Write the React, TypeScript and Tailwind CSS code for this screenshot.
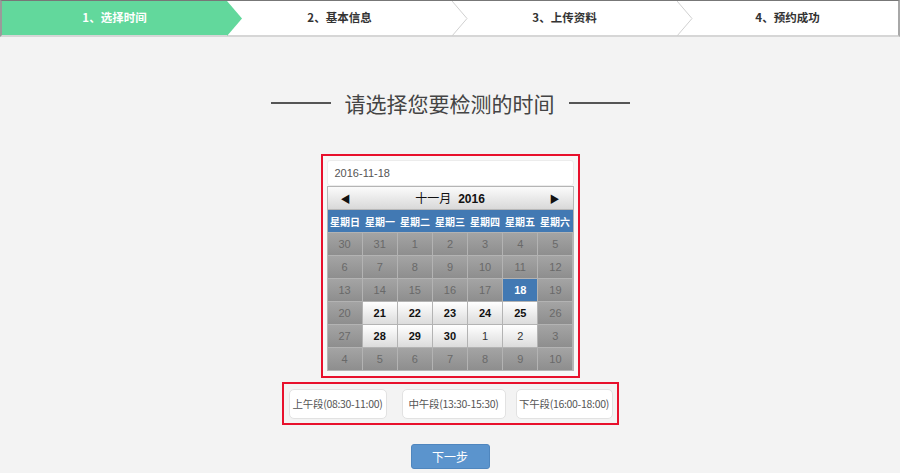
import React from "react";

const CJK = { fontFamily: '"Noto Sans CJK SC", "Noto Sans", sans-serif' };
const ARIAL = { fontFamily: '"Liberation Sans", "Noto Sans CJK SC", sans-serif' };

type Cell = { d: number; t: "g" | "w" | "wo" | "s" };

const rows: Cell[][] = [
  [30, 31, 1, 2, 3, 4, 5].map((d) => ({ d, t: "g" as const })),
  [6, 7, 8, 9, 10, 11, 12].map((d) => ({ d, t: "g" as const })),
  [
    { d: 13, t: "g" },
    { d: 14, t: "g" },
    { d: 15, t: "g" },
    { d: 16, t: "g" },
    { d: 17, t: "g" },
    { d: 18, t: "s" },
    { d: 19, t: "g" },
  ],
  [
    { d: 20, t: "g" },
    { d: 21, t: "w" },
    { d: 22, t: "w" },
    { d: 23, t: "w" },
    { d: 24, t: "w" },
    { d: 25, t: "w" },
    { d: 26, t: "g" },
  ],
  [
    { d: 27, t: "g" },
    { d: 28, t: "w" },
    { d: 29, t: "w" },
    { d: 30, t: "w" },
    { d: 1, t: "wo" },
    { d: 2, t: "wo" },
    { d: 3, t: "g" },
  ],
  [4, 5, 6, 7, 8, 9, 10].map((d) => ({ d, t: "g" as const })),
];

const weekdays = ["星期日", "星期一", "星期二", "星期三", "星期四", "星期五", "星期六"];

function DayCell({ c }: { c: Cell }) {
  if (c.t === "s") {
    return (
      <div className="h-[22px] flex items-center justify-center bg-[#4279b3] text-white font-bold text-[11px]">
        {c.d}
      </div>
    );
  }
  if (c.t === "w" || c.t === "wo") {
    return (
      <div
        className={`h-[22px] flex items-center justify-center bg-gradient-to-b from-[#ffffff] to-[#dcdcdc] text-[11px] ${
          c.t === "w" ? "font-bold text-[#111]" : "text-[#333]"
        }`}
      >
        {c.d}
      </div>
    );
  }
  return (
    <div className="h-[22px] flex items-center justify-center bg-gradient-to-b from-[#a4a4a4] to-[#8e8e8e] text-[11px] text-[#696969]">
      {c.d}
    </div>
  );
}

function Step({
  label,
  active,
  last,
}: {
  label: string;
  active?: boolean;
  last?: boolean;
}) {
  return (
    <div
      className={`relative h-full flex items-center justify-center ${
        last ? "flex-1" : "w-[225px]"
      } ${active ? "bg-[#62d89c]" : "bg-white"}`}
    >
      <span
        className={`text-[11.5px] font-bold ${active ? "text-white" : "text-[#333]"}`}
        style={CJK}
      >
        {label}
      </span>
      {!last && (
        <svg
          className="absolute top-0 left-full z-10"
          width="16"
          height="35"
          viewBox="0 0 16 35"
        >
          {active ? (
            <polygon points="0,0 15,17.5 0,35" fill="#62d89c" />
          ) : (
            <polyline
              points="0,0 15,17.5 0,35"
              fill="none"
              stroke="#d0d0d0"
              strokeWidth="1"
            />
          )}
        </svg>
      )}
    </div>
  );
}

export default function App() {
  return (
    <div className="w-[900px] h-[473px] bg-[#f3f3f3] overflow-hidden" style={CJK}>
      {/* Steps bar */}
      <div className="h-[37px] flex border-t border-t-[#777] border-b-2 border-b-[#d6d6d6] border-l-2 border-l-[#9a9a9a] border-r-2 border-r-[#a8a8a8] bg-white">
        <Step label="1、选择时间" active />
        <Step label="2、基本信息" />
        <Step label="3、上传资料" />
        <Step label="4、预约成功" last />
      </div>

      {/* Title */}
      <div className="mt-[52px] flex items-center justify-center">
        <div className="w-[60px] h-[2px] bg-[#555]" />
        <div className="mx-[14px] text-[21px] text-[#444] leading-[28px]" style={CJK}>
          请选择您要检测的时间
        </div>
        <div className="w-[61px] h-[2px] bg-[#555]" />
      </div>

      {/* Calendar box */}
      <div className="mt-[37px] flex justify-center">
        <div className="w-[259px] border-2 border-[#e8102c] pt-[4px] px-[4px] pb-[5px] bg-[#f7f7f7]">
          <div
            className="h-[26px] bg-white rounded-[3px] border border-[#ececec] flex items-center pl-[7px] text-[11px] text-[#555]"
            style={ARIAL}
          >
            2016-11-18
          </div>
          <div className="border border-[#b5b5b5]">
            <div className="h-[23px] flex items-center justify-between px-[13px] bg-gradient-to-b from-[#fbfbfb] to-[#d9d9d9] border-b border-[#b8b8b8]">
              <span className="text-[10px] text-[#111]">◀</span>
              <span className="text-[12px] font-bold text-[#111]">
                <span style={CJK} className="font-normal">十一月</span>
                <span style={ARIAL} className="ml-[7px]">2016</span>
              </span>
              <span className="text-[10px] text-[#111]">▶</span>
            </div>
            <div className="h-[22px] grid grid-cols-7 bg-[#4279b3]">
              {weekdays.map((w) => (
                <div
                  key={w}
                  className="flex items-center justify-center text-white text-[10px] font-bold"
                  style={CJK}
                >
                  {w}
                </div>
              ))}
            </div>
            <div className="grid grid-cols-7 gap-px bg-[#b3b3b3] pt-px" style={ARIAL}>
              {rows.flat().map((c, i) => (
                <DayCell key={i} c={c} />
              ))}
            </div>
          </div>
        </div>
      </div>

      {/* Time slots */}
      <div className="mt-[4px] flex justify-center">
        <div className="w-[337px] h-[43px] border-2 border-[#e8102c] flex items-center pl-[5px]">
          {[
            { t: "上午段(08:30-11:00)", w: "w-[98px]", ml: "" },
            { t: "中午段(13:30-15:30)", w: "w-[104px]", ml: "ml-[15px]" },
            { t: "下午段(16:00-18:00)", w: "w-[97px]", ml: "ml-[10px]" },
          ].map((b) => (
            <div
              key={b.t}
              className={`${b.w} ${b.ml} h-[30px] bg-white rounded-[5px] border border-[#e2e2e2] flex items-center justify-center text-[10.5px] text-[#555] tracking-[-0.3px]`}
              style={CJK}
            >
              {b.t}
            </div>
          ))}
        </div>
      </div>

      {/* Next button */}
      <div className="mt-[19px] flex justify-center">
        <div className="w-[79px] h-[25px] rounded-[3px] bg-[#5b94cd] border border-[#4f86be] flex items-center justify-center text-white text-[12px]" style={CJK}>
          下一步
        </div>
      </div>
    </div>
  );
}
